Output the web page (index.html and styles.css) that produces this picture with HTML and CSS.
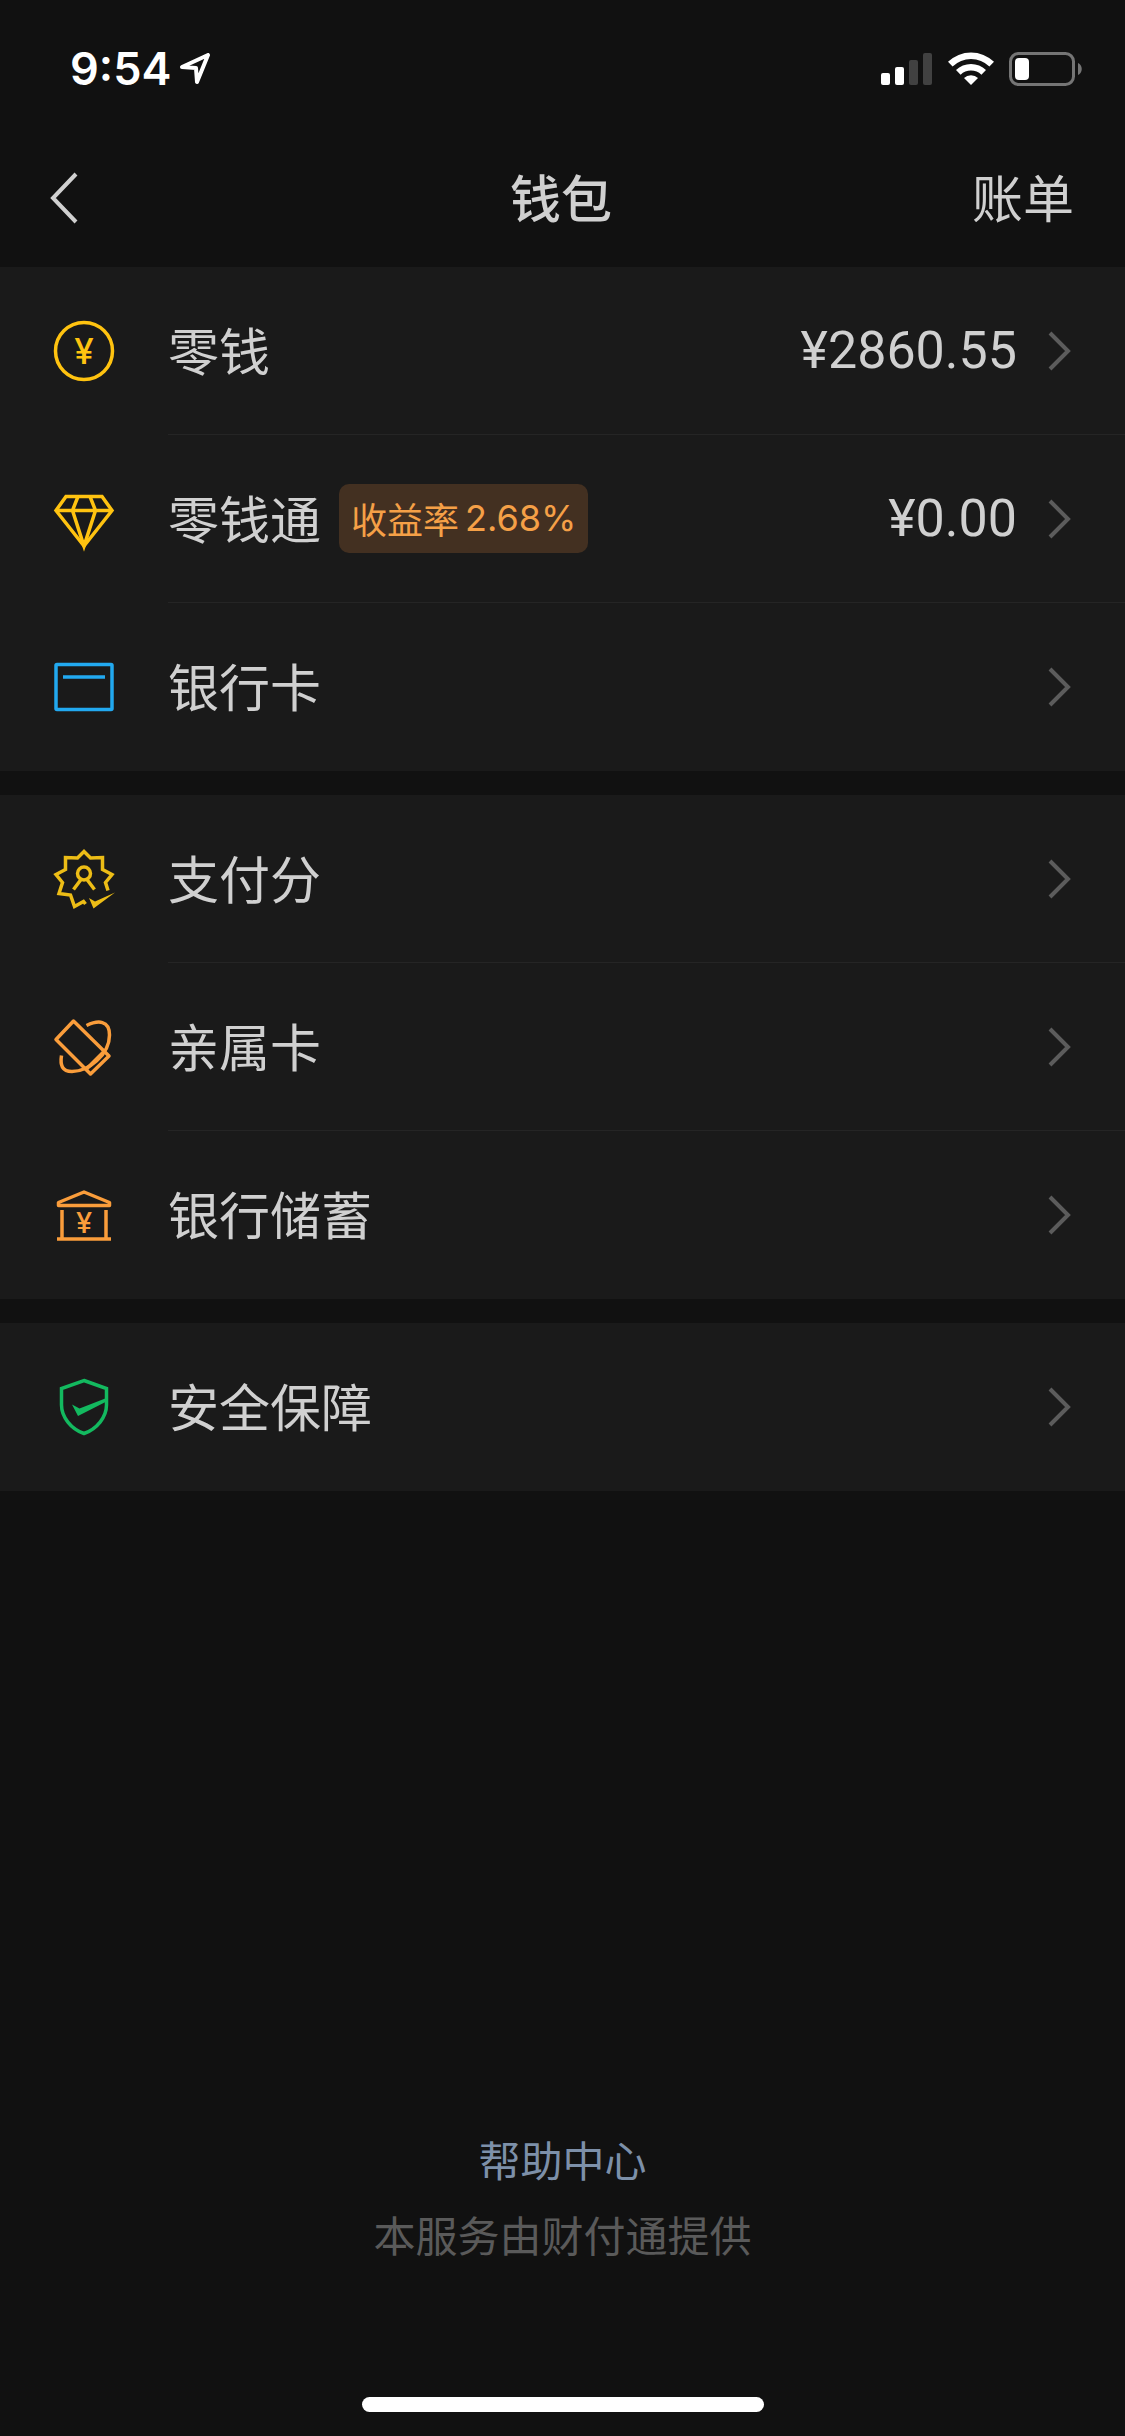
FILE: index.html
```html
<!DOCTYPE html>
<html lang="zh-CN">
<head>
    <meta charset="UTF-8">
    <meta name="viewport" content="width=device-width, initial-scale=1.0">
    <title>钱包</title>
    <link rel="stylesheet" href="styles.css">
</head>
<body>
    <div class="status-bar">
        <div class="status-left">
            <span class="time">9:54</span>
            <svg class="location" width="32" height="32" viewBox="0 0 32 32">
                <path d="M2 14 28 2 17 29 16 15z"/>
            </svg>
        </div>
        <div class="status-right">
            <svg width="52" height="34" viewBox="0 0 52 34">
                <rect x="0" y="21" width="9" height="12" rx="2" fill="#fff"/>
                <rect x="14" y="15" width="9" height="18" rx="2" fill="#fff"/>
                <rect x="28" y="8" width="9" height="25" rx="2" fill="#414141"/>
                <rect x="42" y="1" width="9" height="32" rx="2" fill="#414141"/>
            </svg>
            <svg width="46" height="34" viewBox="0 0 46 34">
                <path d="M0 9.8a33 33 0 0 1 46 0l-4.600 4.600a26.500 26.500 0 0 0-36.800 0z" fill="#fff"/>
                <path d="M8 18a21.500 21.500 0 0 1 30 0l-4.600 4.800a15 15 0 0 0-20.800 0z" fill="#fff"/>
                <path d="M16 26a10 10 0 0 1 14 0L23 33z" fill="#fff"/>
            </svg>
            <svg width="74" height="34" viewBox="0 0 74 34">
                <rect x="1.500" y="1.500" width="63" height="31" rx="8" fill="none" stroke="#757575" stroke-width="3"/>
                <rect x="6" y="6" width="14" height="22" rx="4" fill="#fff"/>
                <path d="M69 11c5 2 5 10 0 12z" fill="#757575"/>
            </svg>
        </div>
    </div>

    <header class="nav-bar">
        <button class="back" type="button" aria-label="返回">
            <svg width="32" height="54" viewBox="0 0 32 54">
                <path d="M28 3 5 27 28 51"/>
            </svg>
        </button>
        <h1 class="title">钱包</h1>
        <a class="bill" href="#bill">账单</a>
    </header>

    <main>
        <nav class="group">
            <a class="row" href="#balance">
                <svg class="icon yellow" viewBox="0 0 72 72">
                    <circle cx="36" cy="36" r="28.500"/>
                    <text class="yen" x="36" y="49" font-size="35">¥</text>
                </svg>
                <span class="content">
                    <span class="label">零钱</span>
                    <span class="value">¥2860.55</span>
                    <svg class="arrow" viewBox="0 0 36 48"><path d="M9 6 27 24 9 42"/></svg>
                </span>
            </a>
            <a class="row" href="#fund">
                <svg class="icon yellow" viewBox="0 0 72 72">
                    <path d="M18 13.500H54L64 27.500 36 63 8 27.500z"/>
                    <path d="M8 27.500H64M30 13.500 24.500 27.500 36 63 47.500 27.500 42 13.500"/>
                </svg>
                <span class="content">
                    <span class="label">零钱通</span>
                    <span class="badge">收益率<span class="rate">2.68%</span></span>
                    <span class="value">¥0.00</span>
                    <svg class="arrow" viewBox="0 0 36 48"><path d="M9 6 27 24 9 42"/></svg>
                </span>
            </a>
            <a class="row" href="#cards">
                <svg class="icon blue" viewBox="0 0 72 72">
                    <rect x="8" y="13.500" width="56" height="45" rx="1"/>
                    <path d="M15 26H57"/>
                </svg>
                <span class="content">
                    <span class="label">银行卡</span>
                    <svg class="arrow" viewBox="0 0 36 48"><path d="M9 6 27 24 9 42"/></svg>
                </span>
            </a>
        </nav>

        <nav class="group">
            <a class="row" href="#score">
                <svg class="icon gold" viewBox="0 0 72 72">
                    <path d="M60 47.500 57.500 39.500 64 31.500 54.500 26.500V14.500L42.500 15 36 8.500 29.500 15 17.500 14.500V26.500L8 31.500 14.500 39.500 11 50.500 22.500 52 26.500 63.500 35.500 58.500 37.500 61"/>
                    <circle cx="36" cy="30.500" r="6.500"/>
                    <path d="M33 36.500 25.500 46.500M39 36.500 46.500 46.500"/>
                    <path class="solid" d="M41 55 47 58.500 67 49.500 45.500 65.500z"/>
                </svg>
                <span class="content">
                    <span class="label">支付分</span>
                    <svg class="arrow" viewBox="0 0 36 48"><path d="M9 6 27 24 9 42"/></svg>
                </span>
            </a>
            <a class="row" href="#family">
                <svg class="icon orange" viewBox="0 0 72 72">
                    <path d="M25.500 10 61 45 42.500 63 8 28.500z"/>
                    <path d="M38.500 14.500C50 9 61.500 9 61.500 24C61.500 44 40 60.500 24 60.500C14 60.500 12 54 13.500 44.500"/>
                    <path d="M55.500 41 38 58.500"/>
                </svg>
                <span class="content">
                    <span class="label">亲属卡</span>
                    <svg class="arrow" viewBox="0 0 36 48"><path d="M9 6 27 24 9 42"/></svg>
                </span>
            </a>
            <a class="row" href="#savings">
                <svg class="icon orange" viewBox="0 0 72 72">
                    <path d="M10.500 26.500V23.500L36 13 61.500 23.500V26.500z"/>
                    <path d="M14 31V60M58 31V60M9 60H63"/>
                    <text class="yen" x="36" y="54" font-size="29">¥</text>
                </svg>
                <span class="content">
                    <span class="label">银行储蓄</span>
                    <svg class="arrow" viewBox="0 0 36 48"><path d="M9 6 27 24 9 42"/></svg>
                </span>
            </a>
        </nav>

        <nav class="group">
            <a class="row" href="#security">
                <svg class="icon green" viewBox="0 0 72 72">
                    <path d="M36 9.500 58.500 17.500V34C58.500 46 49 58 36 62.500C23 58 13.500 46 13.500 34V17.500z"/>
                    <path class="solid" d="M24 33.500 31.500 37.500 58.500 27V30.500L30 45z"/>
                </svg>
                <span class="content">
                    <span class="label">安全保障</span>
                    <svg class="arrow" viewBox="0 0 36 48"><path d="M9 6 27 24 9 42"/></svg>
                </span>
            </a>
        </nav>
    </main>

    <footer class="footer">
        <a class="help" href="#help">帮助中心</a>
        <p class="provider">本服务由财付通提供</p>
        <div class="home-indicator"></div>
    </footer>
</body>
</html>
```
FILE: styles.css
```css
* {
    box-sizing: border-box;
}
body {
    display: flex;
    flex-direction: column;
    min-height: 100vh;
    margin: 0;
    background-color: #111111;
    color: #d0d0d0;
    font-family: "Noto Sans CJK SC", sans-serif;
    font-size: 51px;
    line-height: 72px;
}
a {
    color: inherit;
    text-decoration: none;
}
svg {
    display: block;
    flex: none;
}

/* status bar */
.status-bar {
    display: flex;
    justify-content: space-between;
    align-items: center;
    height: 132px;
    padding: 6px 42px 0 70px;
}
.status-left,
.status-right {
    display: flex;
    align-items: center;
}
.status-left {
    gap: 9px;
}
.status-right {
    gap: 15px;
}
.time {
    color: #ffffff;
    font-family: Inter, sans-serif;
    font-size: 45px;
    font-weight: 600;
}
.location {
    fill: none;
    stroke: #ffffff;
    stroke-width: 4;
    stroke-linejoin: round;
}

/* navigation bar */
.nav-bar {
    display: grid;
    grid-template-columns: 1fr auto 1fr;
    align-items: center;
    height: 135px;
    padding: 0 51px 4px 48px;
}
.back {
    justify-self: start;
    padding: 0;
    border: none;
    background: none;
    cursor: pointer;
}
.back svg {
    fill: none;
    stroke: #d0d0d0;
    stroke-width: 4;
}
.title {
    margin: 0;
    padding-bottom: 4px;
    font-size: 51px;
    font-weight: 500;
}
.bill {
    justify-self: end;
    padding-bottom: 4px;
}

/* list */
.group {
    margin-bottom: 24px;
    background-color: #1a1a1a;
}
.row {
    display: flex;
    align-items: center;
    gap: 48px;
    height: 168px;
    padding-left: 48px;
}
.content {
    display: flex;
    flex: 1;
    align-items: center;
    height: 100%;
    padding-right: 48px;
    border-bottom: 1px solid #252525;
}
.row:last-child .content {
    border-bottom-color: transparent;
}
.label {
    padding-bottom: 4px;
}
.value {
    margin-left: auto;
    font-family: Roboto, sans-serif;
    font-size: 52px;
}
.arrow {
    width: 36px;
    height: 48px;
    margin-left: auto;
    fill: none;
    stroke: #5c5c5c;
    stroke-width: 4;
}
.value + .arrow {
    margin-left: 24px;
}
.badge {
    display: flex;
    gap: 6px;
    margin-left: 18px;
    padding: 0 12px;
    border-radius: 10px;
    background-color: #433021;
    color: #f5a047;
    font-size: 36px;
    line-height: 69px;
}
.rate {
    font-family: Inter, sans-serif;
}

/* icons */
.icon {
    width: 72px;
    height: 72px;
    fill: none;
    stroke: currentColor;
    stroke-width: 3.5;
}
.icon .solid {
    fill: currentColor;
    stroke: none;
}
.yen {
    fill: currentColor;
    stroke: none;
    font-family: Inter, sans-serif;
    font-weight: 500;
    text-anchor: middle;
}
.yellow {
    color: #ffc310;
}
.blue {
    color: #22a9f0;
}
.gold {
    color: #edbd16;
}
.orange {
    color: #fa9d3b;
    stroke-linejoin: round;
}
.green {
    color: #13b95f;
}

/* footer */
.footer {
    display: flex;
    flex-direction: column;
    align-items: center;
    margin-top: auto;
    padding-bottom: 24px;
    font-size: 42px;
    line-height: 75px;
}
.help {
    color: #7d90a9;
}
.provider {
    margin: 0 0 126px;
    color: #5a5a5a;
}
.home-indicator {
    width: 402px;
    height: 15px;
    border-radius: 8px;
    background-color: #ffffff;
}
```
